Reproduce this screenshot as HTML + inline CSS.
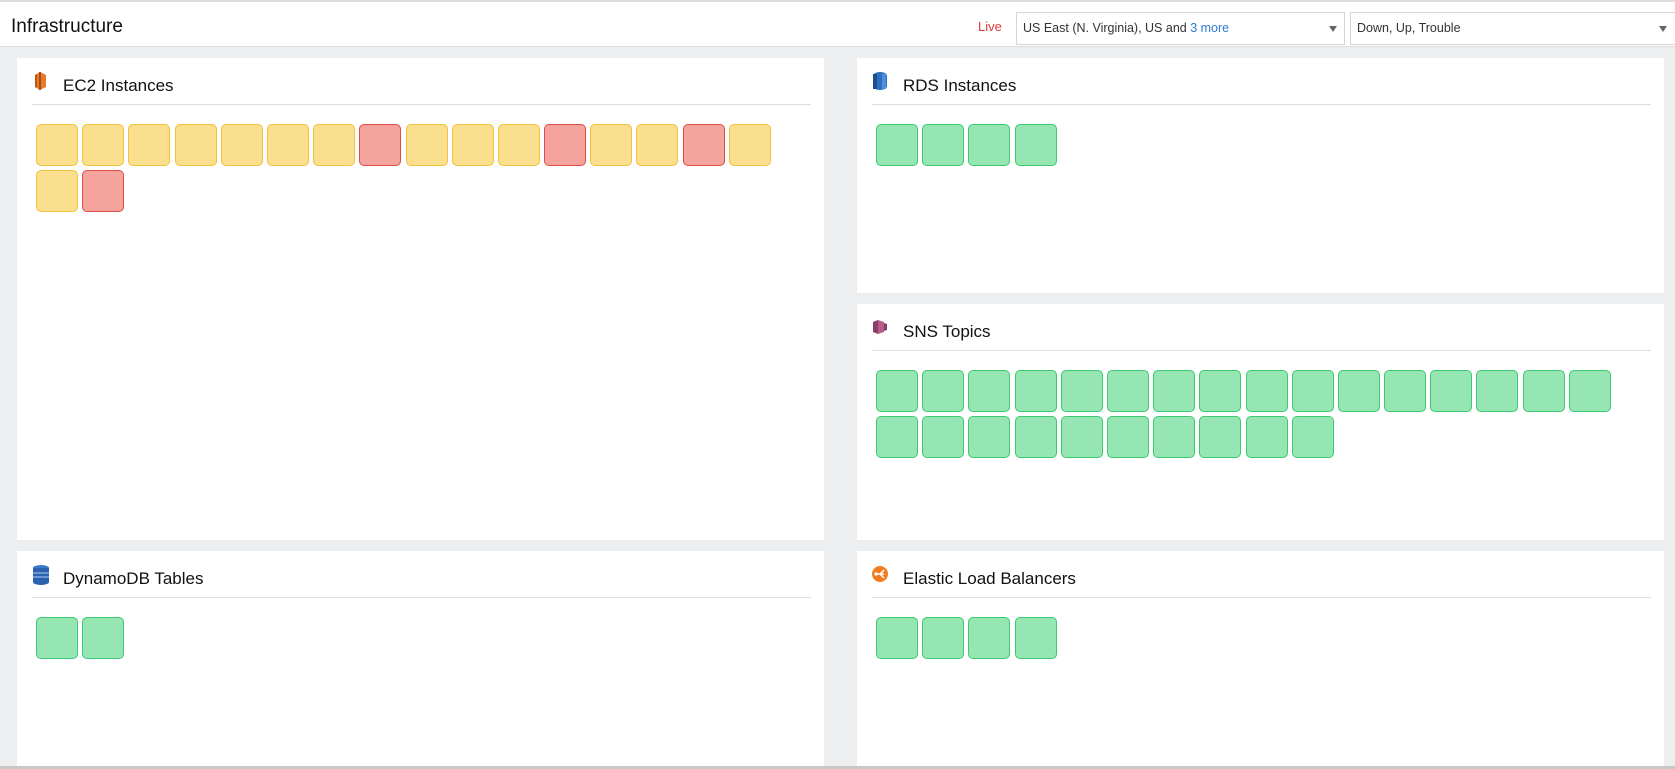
<!DOCTYPE html>
<html><head><meta charset="utf-8"><style>
*{margin:0;padding:0;box-sizing:border-box}
body{width:1675px;height:769px;background:#edeef0;font-family:"Liberation Sans",sans-serif;position:relative;overflow:hidden}
.hdr{position:absolute;left:0;top:0;width:1675px;height:47px;background:#fff;border-top:2px solid #dcdcdc;border-bottom:1px solid #dcdcdc}
.title{position:absolute;left:11px;top:14px;font-size:19px;color:#111}
.live{position:absolute;left:978px;top:17px;font-size:13px;color:#e23b3b}
.sel{position:absolute;top:10px;height:33px;border:1px solid #d6d6d6;background:#fff;font-size:12.5px;color:#333;padding:8px 6px}
.sel b{font-weight:normal;color:#2d7ad6}
.sel .ar{position:absolute;right:7px;top:13px;width:0;height:0;border-left:4px solid transparent;border-right:4px solid transparent;border-top:6px solid #666}
.p{position:absolute;background:#fff}
.pt{position:absolute;left:15px;right:13px;top:0;height:47px;border-bottom:1px solid #dedede}
.pt span{position:absolute;left:31px;top:18px;font-size:17px;color:#111}
.pt svg{position:absolute;left:0;top:13px}
.tiles{position:absolute;left:19px;top:66px;width:770px}
.t{float:left;width:42px;height:42px;border-radius:5px;margin:0 4.2px 4px 0;border:1px solid}
.y{background:#fadf8f;border-color:#f2c23c}
.r{background:#f4a49c;border-color:#dc4e47}
.g{background:#96e6b3;border-color:#3cc971}
</style></head><body>
<div class="hdr">
<div class="title">Infrastructure</div>
<div class="live">Live</div>
<div class="sel" style="left:1016px;width:329px">US East (N. Virginia), US and <b>3 more</b><div class="ar"></div></div>
<div class="sel" style="left:1350px;width:330px">Down, Up, Trouble<div class="ar" style="right:12px"></div></div>
</div>

<div class="p" style="left:17px;top:58px;width:807px;height:482px">
<div class="pt"><svg width="16" height="20" viewBox="0 0 16 20"><path d="M3 4 L8 1 L14 4 L14 16 L8 19 L3 16Z" fill="#e8782a"/><path d="M8 1 V19" stroke="#a84e12" stroke-width="2"/><path d="M3 4 L5 3 V17 L3 16Z" fill="#b65a1a"/></svg><span>EC2 Instances</span></div>
<div class="tiles"><div class="t y"></div><div class="t y"></div><div class="t y"></div><div class="t y"></div><div class="t y"></div><div class="t y"></div><div class="t y"></div><div class="t r"></div><div class="t y"></div><div class="t y"></div><div class="t y"></div><div class="t r"></div><div class="t y"></div><div class="t y"></div><div class="t r"></div><div class="t y"></div><div style="clear:both"></div><div class="t y"></div><div class="t r"></div></div>
</div>

<div class="p" style="left:857px;top:58px;width:807px;height:235px">
<div class="pt"><svg width="16" height="20" viewBox="0 0 16 20"><rect x="1" y="1" width="14" height="18" rx="7" ry="4" fill="#2e6fc0"/><rect x="1" y="3" width="4" height="15" fill="#1c4f8f"/><rect x="10" y="3" width="4" height="15" fill="#4f8fdc"/></svg><span>RDS Instances</span></div>
<div class="tiles"><div class="t g"></div><div class="t g"></div><div class="t g"></div><div class="t g"></div></div>
</div>

<div class="p" style="left:857px;top:304px;width:807px;height:236px">
<div class="pt"><svg width="16" height="20" viewBox="0 0 16 20"><path d="M1 5 L6 3 L6 17 L1 15Z" fill="#8a3f66"/><path d="M6 3 L12 5 L12 15 L6 17Z" fill="#b45e8c"/><path d="M12 6 L15 7 L15 13 L12 14Z" fill="#8a3f66"/></svg><span>SNS Topics</span></div>
<div class="tiles"><div class="t g"></div><div class="t g"></div><div class="t g"></div><div class="t g"></div><div class="t g"></div><div class="t g"></div><div class="t g"></div><div class="t g"></div><div class="t g"></div><div class="t g"></div><div class="t g"></div><div class="t g"></div><div class="t g"></div><div class="t g"></div><div class="t g"></div><div class="t g"></div><div style="clear:both"></div><div class="t g"></div><div class="t g"></div><div class="t g"></div><div class="t g"></div><div class="t g"></div><div class="t g"></div><div class="t g"></div><div class="t g"></div><div class="t g"></div><div class="t g"></div></div>
</div>

<div class="p" style="left:17px;top:551px;width:807px;height:216px">
<div class="pt"><svg width="18" height="22" viewBox="0 0 18 22"><ellipse cx="9" cy="4" rx="8" ry="3" fill="#3a78c8"/><rect x="1" y="4" width="16" height="14" fill="#2a62ad"/><ellipse cx="9" cy="18" rx="8" ry="3" fill="#2a62ad"/><path d="M1 9 H17 M1 13 H17" stroke="#8fb8ea" stroke-width="1.2"/></svg><span>DynamoDB Tables</span></div>
<div class="tiles"><div class="t g"></div><div class="t g"></div></div>
</div>

<div class="p" style="left:857px;top:551px;width:807px;height:216px">
<div class="pt"><svg width="18" height="20" viewBox="0 0 18 20"><circle cx="8" cy="10" r="8" fill="#f07d22"/><path d="M4 10 H8 M8 10 L12 6 M8 10 L12 14 M8 10 H12" stroke="#fff" stroke-width="1.5"/><circle cx="4" cy="10" r="1.6" fill="#fff"/></svg><span>Elastic Load Balancers</span></div>
<div class="tiles"><div class="t g"></div><div class="t g"></div><div class="t g"></div><div class="t g"></div></div>
</div>
<div style="position:absolute;left:0;top:766px;width:1675px;height:3px;background:#c8c8c8"></div>
</body></html>
